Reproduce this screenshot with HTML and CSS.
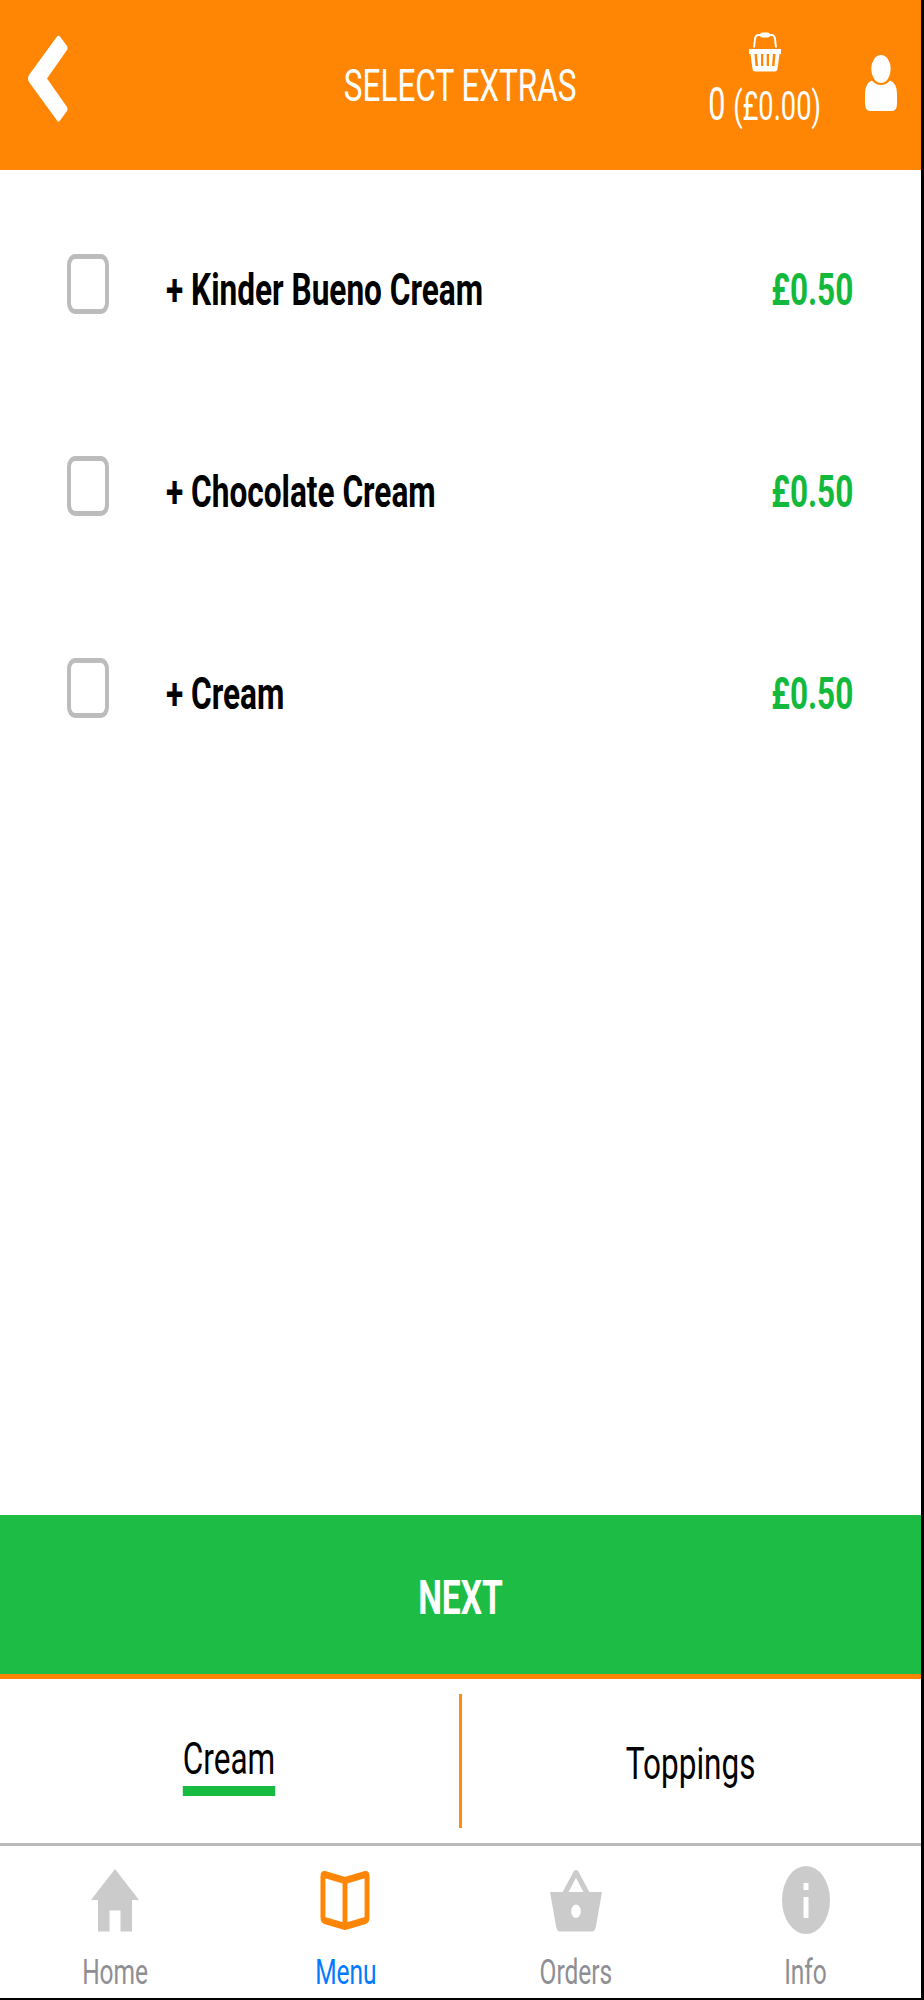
FILE: index.html
```html
<!DOCTYPE html>
<html lang="en">
<head>
    <meta charset="UTF-8">
    <meta name="viewport" content="width=device-width, initial-scale=1.0">
    <title>Select Extras</title>
    <link rel="stylesheet" href="styles.css">
</head>
<body>
    <div class="app">
        <header class="header">
            <a href="#" class="back" aria-label="Back">
                <svg width="40" height="88" viewBox="0 0 40 88"><path d="M29 1.5Q30.500 0 32 1.500L39 11Q40 13 39 15L19 43.500 39 72Q40 74 39 76L32 85.500Q30.500 88 29 85.500L1 47Q-1 43.500 1 40Z" fill="#fff"/></svg>
            </a>
            <h1><span class="narrow">SELECT EXTRAS</span></h1>
            <a href="#" class="cart">
                <svg width="32" height="40" viewBox="0 0 32 40">
                    <path d="M5 15.500L6 7Q6.500 3 9.500 3H22.500Q25.500 3 26 7L27 15.500" fill="none" stroke="#fff" stroke-width="2"/>
                    <rect x="11" y="0.500" width="10" height="5" rx="2.500" fill="#fff"/>
                    <path fill-rule="evenodd" fill="#fff" d="M0 17H32V22H30.500L28.500 37Q28 39.500 26 39.500H6Q4 39.500 3.500 37L1.500 22H0ZM5.500 22L6.500 34H9L8 22ZM12 22V34H14.300V22ZM17.700 22V34H20V22ZM24 22L23 34H25.500L26.500 22Z"/>
                </svg>
                <span class="cart-text narrow">0 <small>(£0.00)</small></span>
            </a>
            <a href="#" class="user" aria-label="Account">
                <svg width="32" height="56" viewBox="0 0 32 56">
                    <ellipse cx="16" cy="14" rx="9.700" ry="14" fill="#fff"/>
                    <path d="M7 25.500Q11 30 16 30T25 25.500Q32 28 32 39V48Q32 56 27 56H5Q0 56 0 48V39Q0 28 7 25.500Z" fill="#fff"/>
                </svg>
            </a>
        </header>

        <main class="extras">
            <label class="extra">
                <input type="checkbox">
                <span class="name">+ Kinder Bueno Cream</span>
                <span class="price">£0.50</span>
            </label>
            <label class="extra">
                <input type="checkbox">
                <span class="name">+ Chocolate Cream</span>
                <span class="price">£0.50</span>
            </label>
            <label class="extra">
                <input type="checkbox">
                <span class="name">+ Cream</span>
                <span class="price">£0.50</span>
            </label>
        </main>

        <button class="next"><span class="narrow">NEXT</span></button>

        <div class="tabs">
            <a href="#" class="tab active"><span class="narrow">Cream</span></a>
            <div class="divider"></div>
            <a href="#" class="tab"><span class="narrow">Toppings</span></a>
        </div>

        <nav class="nav">
            <a href="#">
                <svg width="56" height="68" viewBox="0 0 56 68"><path d="M28 3L52 34H45V65.500H33.500V44.500H22.500V65.500H11V34H4Z" fill="#cbcbcb"/></svg>
                <span class="narrow">Home</span>
            </a>
            <a href="#" class="active">
                <svg width="56" height="68" viewBox="0 0 80 68" preserveAspectRatio="none"><path d="M40 14.500L11 8.500Q8.500 8 8.500 10V51Q8.500 54 11 54.500L40 60.500 69 54.500Q71.500 54 71.500 51V10Q71.500 8 69 8.500ZM40 14.500V60" fill="none" stroke="#ff8605" stroke-width="7" stroke-linejoin="round"/></svg>
                <span class="narrow">Menu</span>
            </a>
            <a href="#">
                <svg width="56" height="68" viewBox="0 0 56 68">
                    <path d="M16.500 28L28 6.500L39.500 28" fill="none" stroke="#cbcbcb" stroke-width="5" stroke-linejoin="round"/>
                    <path fill-rule="evenodd" d="M2 26H54L48 60Q47 65.500 44 65.500H12Q9 65.500 8 60ZM28 38.500A4.800 6.800 0 0 0 28 52.100A4.800 6.800 0 0 0 28 38.500Z" fill="#cbcbcb"/>
                </svg>
                <span class="narrow">Orders</span>
            </a>
            <a href="#">
                <svg width="56" height="68" viewBox="0 0 56 68">
                    <ellipse cx="28" cy="34" rx="24" ry="34" fill="#cbcbcb"/>
                    <path d="M25.500 17H30.500V24H25.500ZM25.500 31H30.500V52H25.500Z" fill="#fff"/>
                </svg>
                <span class="narrow">Info</span>
            </a>
        </nav>
    </div>
</body>
</html>
```
FILE: styles.css
```css
* {
    box-sizing: border-box;
}
body {
    margin: 0;
    background-color: #000;
    font-family: Roboto, "Liberation Sans", sans-serif;
}
a {
    color: inherit;
    text-decoration: none;
}
svg {
    display: block;
    flex-shrink: 0;
}
.app {
    display: flex;
    flex-direction: column;
    width: 921px;
    height: 1998px;
    background-color: #fff;
}
.narrow {
    display: inline-block;
    white-space: nowrap;
    transform: scaleX(0.7);
}

/* header */
.header {
    display: grid;
    grid-template-columns: 310px 301px 229px 81px;
    height: 170px;
    background-color: #ff8605;
    color: #fff;
}
.back {
    padding: 35px 0 0 28px;
}
h1 {
    display: flex;
    align-items: center;
    justify-content: center;
    margin: 0;
    font-size: 45px;
    font-weight: 400;
}
.cart {
    display: flex;
    flex-direction: column;
    align-items: center;
    padding: 32px 0 0 79px;
}
.cart-text {
    margin-top: 8px;
    font-size: 46px;
    line-height: 48px;
    transform: scaleX(0.665);
}
.cart-text small {
    font-size: 41px;
}
.user {
    padding: 55px 0 0 25px;
}

/* list of extras */
.extras {
    flex: 1;
    padding-top: 18px;
}
.extra {
    display: flex;
    align-items: center;
    height: 202px;
    padding: 0 68px 0 67px;
    font-size: 45px;
    font-weight: 700;
}
.extra input {
    appearance: none;
    width: 42px;
    height: 60px;
    margin: 0 57px 10px 0;
    border: solid #bcbcbc;
    border-width: 5px 4px;
    border-radius: 8px / 11px;
}
.name {
    flex: 1;
    white-space: nowrap;
    transform: scaleX(0.702);
    transform-origin: left;
}
.price {
    color: #12b93d;
    transform: scaleX(0.7);
    transform-origin: right;
}

.next {
    height: 159px;
    padding: 5px 0 0;
    border: none;
    background-color: #1dbd45;
    color: #fff;
    font-family: inherit;
    font-size: 48px;
    font-weight: 700;
}

/* tabs */
.tabs {
    display: flex;
    height: 172px;
    border-top: 5px solid #f98503;
    border-bottom: 3px solid #bbb;
}
.tab {
    flex: 1;
    display: flex;
    align-items: center;
    justify-content: center;
    padding: 5px 2px 0 0;
    color: #000;
    font-size: 45px;
    line-height: 52px;
}
.tab.active span {
    margin-top: 2px;
    padding-bottom: 1px;
    border-bottom: 10px solid #17bb40;
}
.divider {
    width: 3px;
    height: 134px;
    margin-top: 15px;
    background-color: #ff8c12;
}

/* bottom navigation */
.nav {
    display: flex;
    height: 152px;
    padding-top: 20px;
    color: #8e8e93;
    font-size: 35px;
    line-height: 40px;
}
.nav a {
    flex: 1;
    display: flex;
    flex-direction: column;
    align-items: center;
    gap: 19px;
}
.nav .active {
    color: #007aff;
}
```
